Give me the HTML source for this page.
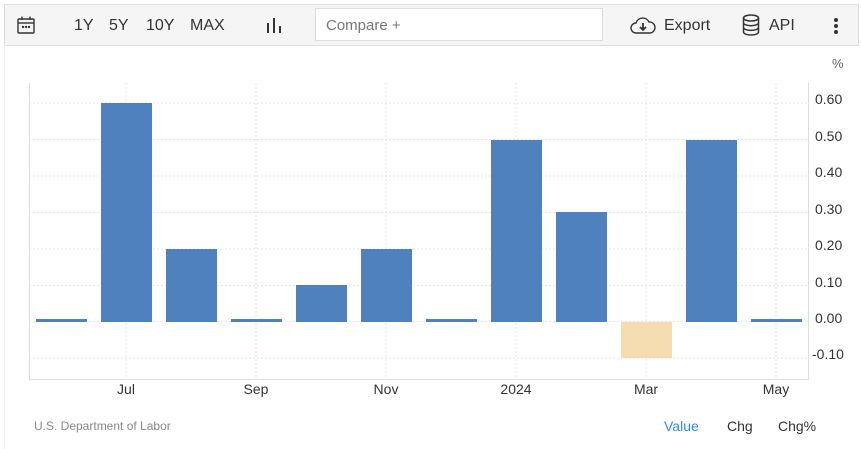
<!DOCTYPE html><html><head><style>
body{margin:0;width:861px;height:449px;background:#fff;font-family:"Liberation Sans",sans-serif;position:relative;overflow:hidden}
.tb{position:absolute;left:4px;top:4px;width:853px;height:40px;background:#f5f5f5;border:1px solid #ddd}
.t{position:absolute;top:17px;font-size:16px;color:#333}
.cmp{position:absolute;left:315px;top:8px;width:288px;height:33px;background:#fff;border:1px solid #ddd;box-sizing:border-box;font-size:15px;color:#777;padding:8px 10px}
.side{position:absolute;left:4px;top:45px;width:1px;height:404px;background:#eee}
.yl{position:absolute;left:815px;font-size:14px;color:#333}
.xl{position:absolute;top:381px;font-size:14px;color:#333;transform:translateX(-50%)}
.b{position:absolute;width:51px;background:#4e81bd}
.f{position:absolute;top:418px;font-size:14px;color:#333}
</style></head><body>
<div class="tb"></div>
<svg style="position:absolute;left:16px;top:15px" width="20" height="20" viewBox="0 0 20 20" fill="none" stroke="#333" stroke-width="1.4"><rect x="2" y="4" width="16" height="14" rx="1"/><line x1="2" y1="8" x2="18" y2="8"/><line x1="6" y1="1.5" x2="6" y2="5"/><line x1="14" y1="1.5" x2="14" y2="5"/><circle cx="7" cy="12" r=".5"/><circle cx="10" cy="12" r=".5"/><circle cx="13" cy="12" r=".5"/></svg>
<span class="t" style="left:74px">1Y</span><span class="t" style="left:109px">5Y</span><span class="t" style="left:146px">10Y</span><span class="t" style="left:190px">MAX</span>
<svg style="position:absolute;left:266px;top:17px" width="16" height="16"><rect x="1" y="6" width="2" height="10" fill="#333"/><rect x="7" y="1" width="2" height="15" fill="#333"/><rect x="13" y="9" width="2" height="7" fill="#333"/></svg>
<div class="cmp">Compare +</div>
<svg style="position:absolute;left:630px;top:16px" width="26" height="19" viewBox="0 0 26 19" fill="none" stroke="#333" stroke-width="1.4"><path d="M7 17H6a5 5 0 0 1 0-10 7 7 0 0 1 13-1 5.5 5.5 0 0 1 1 11z"/><path d="M13 7v6M10 11l3 3 3-3" stroke-width="1.8"/></svg>
<span class="t" style="left:664px">Export</span>
<svg style="position:absolute;left:742px;top:14px" width="18" height="22" viewBox="0 0 18 22" fill="none" stroke="#333" stroke-width="1.5"><ellipse cx="9" cy="4" rx="7.5" ry="3"/><path d="M1.5 4v14c0 1.7 3.4 3 7.5 3s7.5-1.3 7.5-3V4M1.5 8.7c0 1.7 3.4 3 7.5 3s7.5-1.3 7.5-3M1.5 13.4c0 1.7 3.4 3 7.5 3s7.5-1.3 7.5-3"/></svg>
<span class="t" style="left:769px">API</span>
<svg style="position:absolute;left:833px;top:17px" width="6" height="18"><circle cx="3" cy="3" r="2" fill="#333"/><circle cx="3" cy="9" r="2" fill="#333"/><circle cx="3" cy="15" r="2" fill="#333"/></svg>
<div class="side"></div>
<span style="position:absolute;left:832px;top:56px;font-size:13px;color:#666">%</span>
<svg style="position:absolute;left:0;top:0" width="861" height="449">
<g stroke="#e6e6e6" stroke-dasharray="2,2" stroke-width="1">
<line x1="29" x2="808" y1="103" y2="103"/><line x1="29" x2="808" y1="139.5" y2="139.5"/><line x1="29" x2="808" y1="176" y2="176"/><line x1="29" x2="808" y1="212.5" y2="212.5"/><line x1="29" x2="808" y1="249" y2="249"/><line x1="29" x2="808" y1="285.5" y2="285.5"/><line x1="29" x2="808" y1="321.5" y2="321.5"/><line x1="29" x2="808" y1="358" y2="358"/>
<line x1="126" x2="126" y1="83" y2="379"/><line x1="256" x2="256" y1="83" y2="379"/><line x1="386" x2="386" y1="83" y2="379"/><line x1="516" x2="516" y1="83" y2="379"/><line x1="646" x2="646" y1="83" y2="379"/><line x1="776" x2="776" y1="83" y2="379"/>
</g>
<line x1="29" x2="808" y1="379.5" y2="379.5" stroke="#ddd"/>
<line x1="29.5" x2="29.5" y1="83" y2="380" stroke="#ddd"/>
<line x1="808.5" x2="808.5" y1="83" y2="380" stroke="#ddd"/>
</svg>
<div class="b" style="left:36px;top:319px;height:3px"></div>
<div class="b" style="left:101px;top:103px;height:219px"></div>
<div class="b" style="left:166px;top:249px;height:73px"></div>
<div class="b" style="left:231px;top:319px;height:3px"></div>
<div class="b" style="left:296px;top:285px;height:37px"></div>
<div class="b" style="left:361px;top:249px;height:73px"></div>
<div class="b" style="left:426px;top:319px;height:3px"></div>
<div class="b" style="left:491px;top:140px;height:182px"></div>
<div class="b" style="left:556px;top:212px;height:110px"></div>
<div class="b" style="left:621px;top:322px;height:36px;background:#f5dbb0"></div>
<div class="b" style="left:686px;top:140px;height:182px"></div>
<div class="b" style="left:751px;top:319px;height:3px"></div>
<span class="yl" style="top:91px">0.60</span><span class="yl" style="top:128px">0.50</span><span class="yl" style="top:164px">0.40</span><span class="yl" style="top:201px">0.30</span><span class="yl" style="top:237px">0.20</span><span class="yl" style="top:274px">0.10</span><span class="yl" style="top:310px">0.00</span><span class="yl" style="top:346px;left:812px">-0.10</span>
<span class="xl" style="left:126px">Jul</span><span class="xl" style="left:256px">Sep</span><span class="xl" style="left:386px">Nov</span><span class="xl" style="left:516px">2024</span><span class="xl" style="left:646px">Mar</span><span class="xl" style="left:776px">May</span>
<span style="position:absolute;left:34px;top:419px;font-size:12px;color:#888">U.S. Department of Labor</span>
<span class="f" style="left:664px;color:#2f8ce8">Value</span><span class="f" style="left:727px">Chg</span><span class="f" style="left:778px">Chg%</span>
</body></html>
